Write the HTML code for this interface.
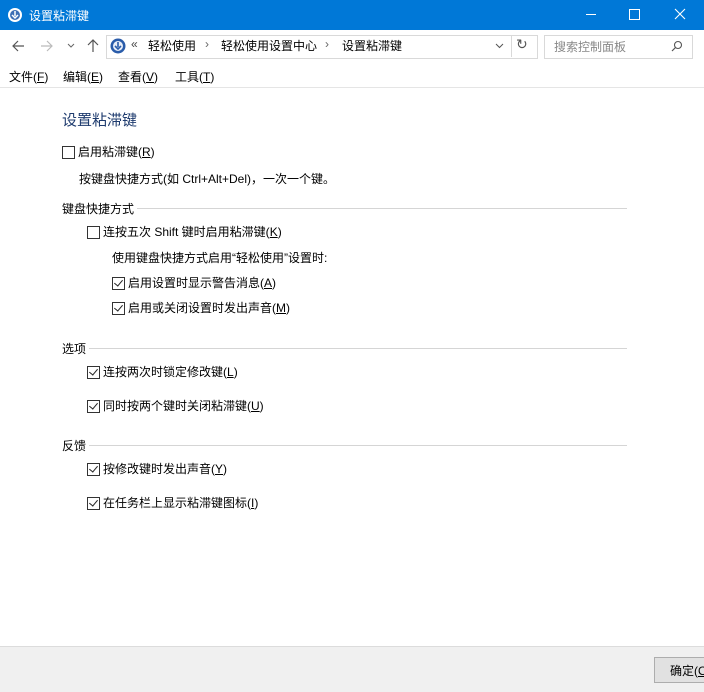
<!DOCTYPE html><html><head><meta charset="utf-8"><style>
body{margin:0;width:704px;height:691px;position:relative;background:#fff;font-family:"Liberation Sans","Noto Sans CJK SC",sans-serif;font-size:12px;color:#000;overflow:hidden}
.a{position:absolute;white-space:nowrap}
.cb{position:absolute;width:11px;height:11px;border:1px solid #333;background:#fff}
.cb.c::after{content:"";position:absolute;left:3px;top:0px;width:4px;height:7px;border:solid #222;border-width:0 1.5px 1.5px 0;transform:rotate(40deg)}
.line{position:absolute;height:1px;background:#d5d5d5}
u{text-decoration:underline}
</style></head><body>
<div class="a" style="left:0;top:0;width:704px;height:30px;background:#0078d7"></div>
<svg class="a" style="left:7px;top:7px" width="16" height="16"><circle cx="8" cy="8" r="7" fill="#fff"/><circle cx="8" cy="8" r="5" fill="#3d6fb5"/><path d="M8 4v5M5 8l3 3 3-3" stroke="#fff" stroke-width="1.5" fill="none"/></svg>
<div class="a" style="left:29px;top:7px;color:#fff;font-size:12px">设置粘滞键</div>
<div class="a" style="left:586px;top:14px;width:10px;height:1px;background:#fff"></div>
<div class="a" style="left:629px;top:9px;width:9px;height:9px;border:1px solid #fff"></div>
<svg class="a" style="left:674px;top:8px" width="12" height="12"><path d="M1 1L11 11M11 1L1 11" stroke="#fff" stroke-width="1.1"/></svg>
<svg class="a" style="left:11px;top:39px" width="14" height="14"><path d="M13 7H2M7 2L2 7l5 5" stroke="#555" stroke-width="1.2" fill="none"/></svg>
<svg class="a" style="left:40px;top:39px" width="14" height="14"><path d="M1 7h11M7 2l5 5-5 5" stroke="#bbb" stroke-width="1.2" fill="none"/></svg>
<svg class="a" style="left:67px;top:43px" width="8" height="6"><path d="M1 1l3 3 3-3" stroke="#666" stroke-width="1" fill="none"/></svg>
<svg class="a" style="left:86px;top:38px" width="14" height="15"><path d="M7 14V2M2 7l5-5 5 5" stroke="#555" stroke-width="1.2" fill="none"/></svg>
<div class="a" style="left:106px;top:35px;width:430px;height:22px;border:1px solid #d9d9d9"></div>
<svg class="a" style="left:110px;top:38px" width="16" height="16"><circle cx="8" cy="8" r="7.5" fill="#2a5caa"/><circle cx="8" cy="8" r="5" fill="#e8eef8"/><path d="M8 4v5M5 8l3 3 3-3" stroke="#2a5caa" stroke-width="1.6" fill="none"/></svg>
<div class="a" style="left:131px;top:37px;color:#444">«</div>
<div class="a" style="left:148px;top:37px">轻松使用</div>
<div class="a" style="left:205px;top:37px;color:#666">›</div>
<div class="a" style="left:221px;top:37px">轻松使用设置中心</div>
<div class="a" style="left:325px;top:37px;color:#666">›</div>
<div class="a" style="left:342px;top:37px">设置粘滞键</div>
<svg class="a" style="left:495px;top:43px" width="9" height="6"><path d="M1 1l3.5 3.5L8 1" stroke="#555" stroke-width="1" fill="none"/></svg>
<div class="a" style="left:511px;top:35px;width:1px;height:22px;background:#d9d9d9"></div>
<div class="a" style="left:516px;top:36px;color:#555;font-size:14px">↻</div>
<div class="a" style="left:544px;top:35px;width:147px;height:22px;border:1px solid #d9d9d9"></div>
<div class="a" style="left:554px;top:38px;color:#888">搜索控制面板</div>
<svg class="a" style="left:671px;top:40px" width="12" height="12"><circle cx="7" cy="5" r="3.5" stroke="#555" stroke-width="1.1" fill="none"/><path d="M4.5 7.5L1 11" stroke="#555" stroke-width="1.2"/></svg>
<div class="a" style="left:9px;top:68px">文件(<u>F</u>)</div>
<div class="a" style="left:63px;top:68px">编辑(<u>E</u>)</div>
<div class="a" style="left:118px;top:68px">查看(<u>V</u>)</div>
<div class="a" style="left:175px;top:68px">工具(<u>T</u>)</div>
<div class="line" style="left:0;top:87px;width:704px;background:#e5e5e5"></div>
<div class="a" style="left:62px;top:109px;font-size:15px;color:#1e3b6e">设置粘滞键</div>
<div class="cb" style="left:62px;top:146px"></div><div class="a" style="left:78px;top:143px">启用粘滞键(<u>R</u>)</div>
<div class="a" style="left:79px;top:170px">按键盘快捷方式(如 Ctrl+Alt+Del)，一次一个键。</div>
<div class="a" style="left:62px;top:200px">键盘快捷方式</div><div class="line" style="left:137px;top:208px;width:490px"></div>
<div class="cb" style="left:87px;top:226px"></div><div class="a" style="left:103px;top:223px">连按五次 Shift 键时启用粘滞键(<u>K</u>)</div>
<div class="a" style="left:112px;top:249px">使用键盘快捷方式启用“轻松使用”设置时:</div>
<div class="cb c" style="left:112px;top:277px"></div><div class="a" style="left:128px;top:274px">启用设置时显示警告消息(<u>A</u>)</div>
<div class="cb c" style="left:112px;top:302px"></div><div class="a" style="left:128px;top:299px">启用或关闭设置时发出声音(<u>M</u>)</div>
<div class="a" style="left:62px;top:340px">选项</div><div class="line" style="left:89px;top:348px;width:538px"></div>
<div class="cb c" style="left:87px;top:366px"></div><div class="a" style="left:103px;top:363px">连按两次时锁定修改键(<u>L</u>)</div>
<div class="cb c" style="left:87px;top:400px"></div><div class="a" style="left:103px;top:397px">同时按两个键时关闭粘滞键(<u>U</u>)</div>
<div class="a" style="left:62px;top:437px">反馈</div><div class="line" style="left:89px;top:445px;width:538px"></div>
<div class="cb c" style="left:87px;top:463px"></div><div class="a" style="left:103px;top:460px">按修改键时发出声音(<u>Y</u>)</div>
<div class="cb c" style="left:87px;top:497px"></div><div class="a" style="left:103px;top:494px">在任务栏上显示粘滞键图标(<u>I</u>)</div>
<div class="a" style="left:0;top:646px;width:704px;height:45px;background:#f0f0f0;border-top:1px solid #dcdcdc"></div>
<div class="a" style="left:654px;top:657px;width:60px;height:24px;background:#e1e1e1;border:1px solid #adadad"></div>
<div class="a" style="left:670px;top:662px">确定(<u>O</u>)</div>
</body></html>
